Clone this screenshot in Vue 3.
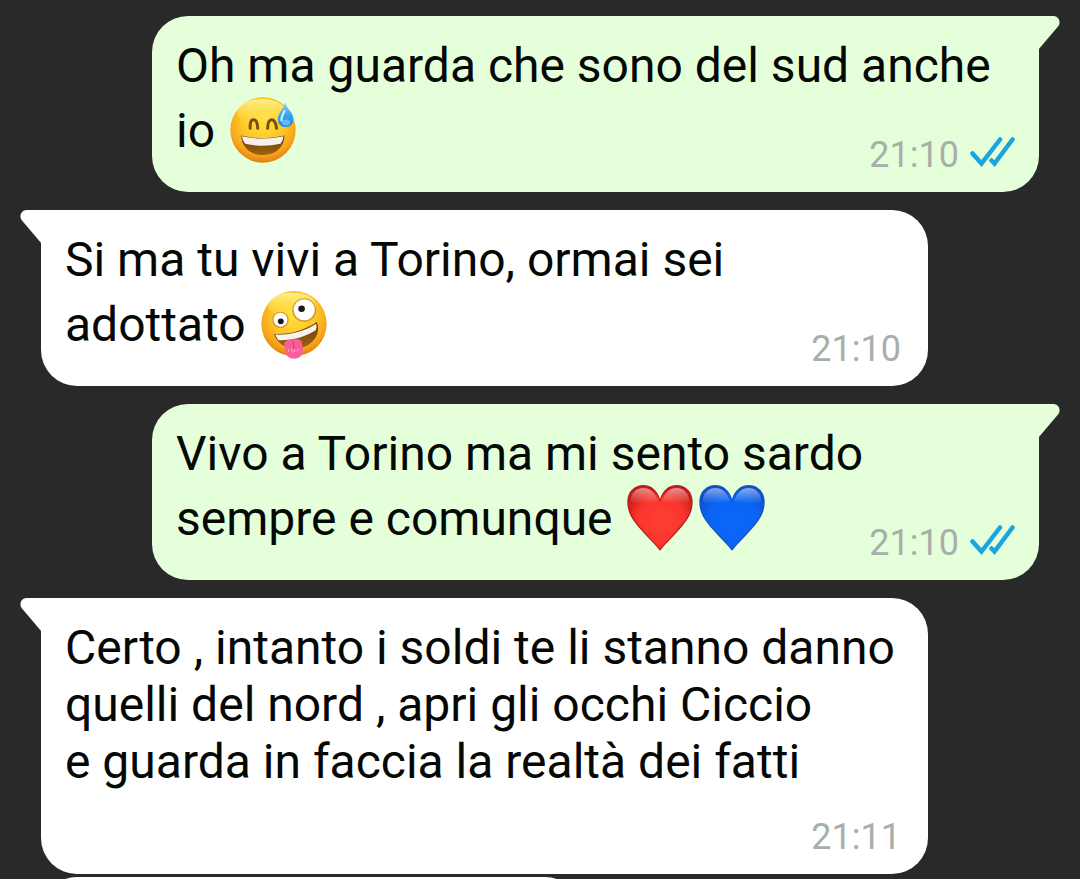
<script setup>
const messages = [
  { side: 'out', lines: [{ text: 'Oh ma guarda che sono del sud anche' }, { text: 'io', emoji: ['sweat'] }], time: '21:10' },
  { side: 'in', lines: [{ text: 'Si ma tu vivi a Torino, ormai sei' }, { text: 'adottato', emoji: ['zany'] }], time: '21:10' },
  { side: 'out', lines: [{ text: 'Vivo a Torino ma mi sento sardo' }, { text: 'sempre e comunque', emoji: ['red', 'blue'] }], time: '21:10' },
  {
    side: 'in',
    tall: true,
    lines: [
      { text: 'Certo , intanto i soldi te li stanno danno' },
      { text: 'quelli del nord , apri gli occhi Ciccio' },
      { text: 'e guarda in faccia la realtà dei fatti' },
    ],
    time: '21:11',
  },
]
</script>

<template>
  <main class="chat">
    <svg class="defs" width="0" height="0" aria-hidden="true">
      <defs>
        <radialGradient id="face" cx=".5" cy=".36" r=".65">
          <stop offset="0" stop-color="#ffe040" />
          <stop offset=".5" stop-color="#fdc828" />
          <stop offset=".8" stop-color="#f8a51a" />
          <stop offset="1" stop-color="#de7c10" />
        </radialGradient>
        <linearGradient id="shine" x1="0" y1="0" x2="0" y2="1">
          <stop offset="0" stop-color="#fff7a0" stop-opacity=".85" />
          <stop offset="1" stop-color="#ffe34a" stop-opacity="0" />
        </linearGradient>
        <linearGradient id="drop" x1="0" y1="0" x2="0" y2="1">
          <stop offset="0" stop-color="#8fd2f5" />
          <stop offset=".5" stop-color="#36a5ec" />
          <stop offset="1" stop-color="#1c8ade" />
        </linearGradient>
        <linearGradient id="mouth" x1="0" y1="0" x2="0" y2="1">
          <stop offset="0" stop-color="#63400c" />
          <stop offset="1" stop-color="#a2620c" />
        </linearGradient>
        <radialGradient id="red" cx=".52" cy=".55" r=".6">
          <stop offset="0" stop-color="#ff4034" />
          <stop offset=".65" stop-color="#f9342d" />
          <stop offset="1" stop-color="#c91d1c" />
        </radialGradient>
        <radialGradient id="blue" cx=".52" cy=".55" r=".6">
          <stop offset="0" stop-color="#0a68fb" />
          <stop offset=".7" stop-color="#0b63f3" />
          <stop offset="1" stop-color="#0f50cf" />
        </radialGradient>
        <linearGradient id="gloss" x1="0" y1="0" x2="0" y2="1">
          <stop offset="0" stop-color="#fff" stop-opacity=".5" />
          <stop offset="1" stop-color="#fff" stop-opacity="0" />
        </linearGradient>
      </defs>
    </svg>

    <article v-for="(m, i) in messages" :key="i" class="bubble" :class="m.side">
      <svg class="tail" viewBox="0 0 22 34" aria-hidden="true">
        <path d="M0 0H15.500C20.500 0 23.500 6 20 10.500L0.500 33.500H0Z" />
      </svg>
      <p class="text" :class="{ tall: m.tall }">
        <template v-for="(line, j) in m.lines" :key="j">
          <br v-if="j">{{ line.text }}<template v-if="line.emoji">{{ ' ' }}<template v-for="e in line.emoji" :key="e"
            ><svg v-if="e === 'sweat'" class="emoji" viewBox="28 32 200 200" role="img" aria-label="😅">
              <circle cx="128" cy="132" r="99" fill="url(#face)" />
              <ellipse cx="124" cy="78" rx="74" ry="40" fill="url(#shine)" />
              <path d="M89 127Q88 101 99 101Q111 101 112 127M142 127Q143 101 154 101Q166 101 169 127" fill="none" stroke="#76500f" stroke-width="9" stroke-linecap="round" />
              <path d="M62 149Q128 165 193 149C193 182 169 208 128 208S63 183 62 149Z" fill="url(#mouth)" />
              <path d="M64 151Q128 165 190 151Q190 164 181 174Q128 186 74 174Q65 164 64 151Z" fill="#f7efe9" />
              <path d="M195 49C202 71 220 79 220 99C220 115 211 123 197 123S174 115 173 101C172 83 190 71 195 49Z" fill="url(#drop)" />
              <path d="M193 75C189 85 183 89 184 103" fill="none" stroke="#c5eafa" stroke-width="7" stroke-linecap="round" />
              <ellipse cx="198" cy="109" rx="12" ry="9" fill="#79d2f8" opacity=".7" />
            </svg><svg v-else-if="e === 'zany'" class="emoji" viewBox="30 27 200 200" role="img" aria-label="🤪">
              <circle cx="130" cy="126" r="99" fill="url(#face)" />
              <ellipse cx="124" cy="70" rx="74" ry="38" fill="url(#shine)" />
              <circle cx="161" cy="85" r="36" fill="#d99a22" />
              <circle cx="161" cy="84" r="32" fill="#fff" />
              <circle cx="153" cy="81" r="10" fill="#1c1a18" />
              <circle cx="89" cy="115" r="25" fill="#d99a22" />
              <circle cx="89" cy="114" r="21" fill="#fff" />
              <circle cx="90" cy="119" r="9" fill="#1c1a18" />
              <path d="M69 157C116 160 163 146 199 121C211 147 197 181 164 195C123 211 82 194 69 157Z" fill="url(#mouth)" />
              <path d="M73 159C118 161 163 149 197 126Q201 137 196 146C162 168 120 178 83 176Q76 168 73 159Z" fill="#f8f1ec" />
              <path d="M100 187Q102 175 126 173Q150 170 153 181L157 205C158 222 146 232 131 232S105 224 104 212Z" fill="#f95d9b" />
              <path d="M113 203V212M123 202L125 213M132 203V212M142 202V209" stroke="#ffacd0" stroke-width="3" />
              <path d="M127 180L130 201" stroke="#dc3e80" stroke-width="4" stroke-linecap="round" />
            </svg><svg v-else class="emoji" viewBox="27 27 202 204" role="img" :aria-label="e === 'red' ? '❤️' : '💙'">
              <path d="M128 230C112 210 91 190 67 163C43 136 27 113 27 79C27 48 48 27 77 27C101 27 119 43 128 70C137 43 155 27 179 27C208 27 229 48 229 79C229 113 213 136 189 163C165 190 144 210 128 230Z" :fill="e === 'red' ? '#b81b1b' : '#1550c4'" />
              <path d="M128 225C113 207 92 186 70 160C46 133 32 112 32 80C32 51 51 33 77 33C101 33 118 49 128 78C138 49 155 33 179 33C205 33 224 51 224 80C224 112 210 133 186 160C164 186 143 207 128 225Z" :fill="`url(#${e})`" />
              <path d="M37 82C37 53 53 36 77 36C99 36 112 51 121 76Q80 88 37 82ZM135 76C144 51 157 36 179 36C203 36 219 53 219 82Q176 88 135 76Z" fill="url(#gloss)" />
            </svg></template></template>
        </template>
      </p>
      <footer class="meta">
        <time>{{ m.time }}</time>
        <svg v-if="m.side === 'out'" class="ticks" viewBox="0 0 45 30" role="img" aria-label="Letto">
          <path d="M2.500 16.500L11.500 26.500L30 2.500M21.500 23.500L24.500 26.500L42.500 2.500" />
        </svg>
      </footer>
    </article>

    <article class="bubble in next" aria-hidden="true"></article>
  </main>
</template>

<style>
html,
body {
  margin: 0;
  background: #292929;
}
</style>

<style scoped>
.chat {
  box-sizing: border-box;
  height: 100vh;
  overflow: hidden;
  padding: 16px 41px 0;
  background: #292929;
  font-family: Roboto, "Noto Sans", sans-serif;
}

.defs {
  position: absolute;
}

.bubble {
  position: relative;
  display: grid;
  margin-bottom: 18px;
  padding: 21px 24px 16px;
  border-radius: 36px;
}

.out {
  margin-left: 111px;
  border-top-right-radius: 0;
  background: #e4ffda;
  fill: #e4ffda;
}

.in {
  margin-right: 111px;
  padding-right: 27px;
  border-top-left-radius: 0;
  background: #fff;
  fill: #fff;
}

.tail {
  position: absolute;
  top: 0;
  left: calc(100% - 1px);
  width: 22px;
  height: 34px;
}

.in .tail {
  right: calc(100% - 1px);
  left: auto;
  transform: scaleX(-1);
}

.text {
  grid-area: 1 / 1;
  margin: 0;
  padding-bottom: 13px;
  color: #050805;
  font-size: 48px;
  line-height: 57px;
  white-space: nowrap;
}

.text.tall {
  padding-bottom: 68px;
}

.emoji {
  width: 66px;
  height: 66px;
  margin: 3px 3px 0;
  overflow: visible;
  vertical-align: -16px;
}

.meta {
  grid-area: 1 / 1;
  place-self: end;
  display: flex;
  align-items: center;
  gap: 11px;
  color: #a9aeaa;
  font-size: 36px;
  line-height: 42px;
}

.ticks {
  width: 45px;
  height: 30px;
  margin-bottom: 6px;
  fill: none;
  stroke: #1ba5df;
  stroke-width: 4.500;
  stroke-linecap: round;
}

.bubble:nth-last-child(2) {
  margin-bottom: 3px;
}

.next {
  min-height: 120px;
  width: 49%;
  border-radius: 36px;
}
</style>
